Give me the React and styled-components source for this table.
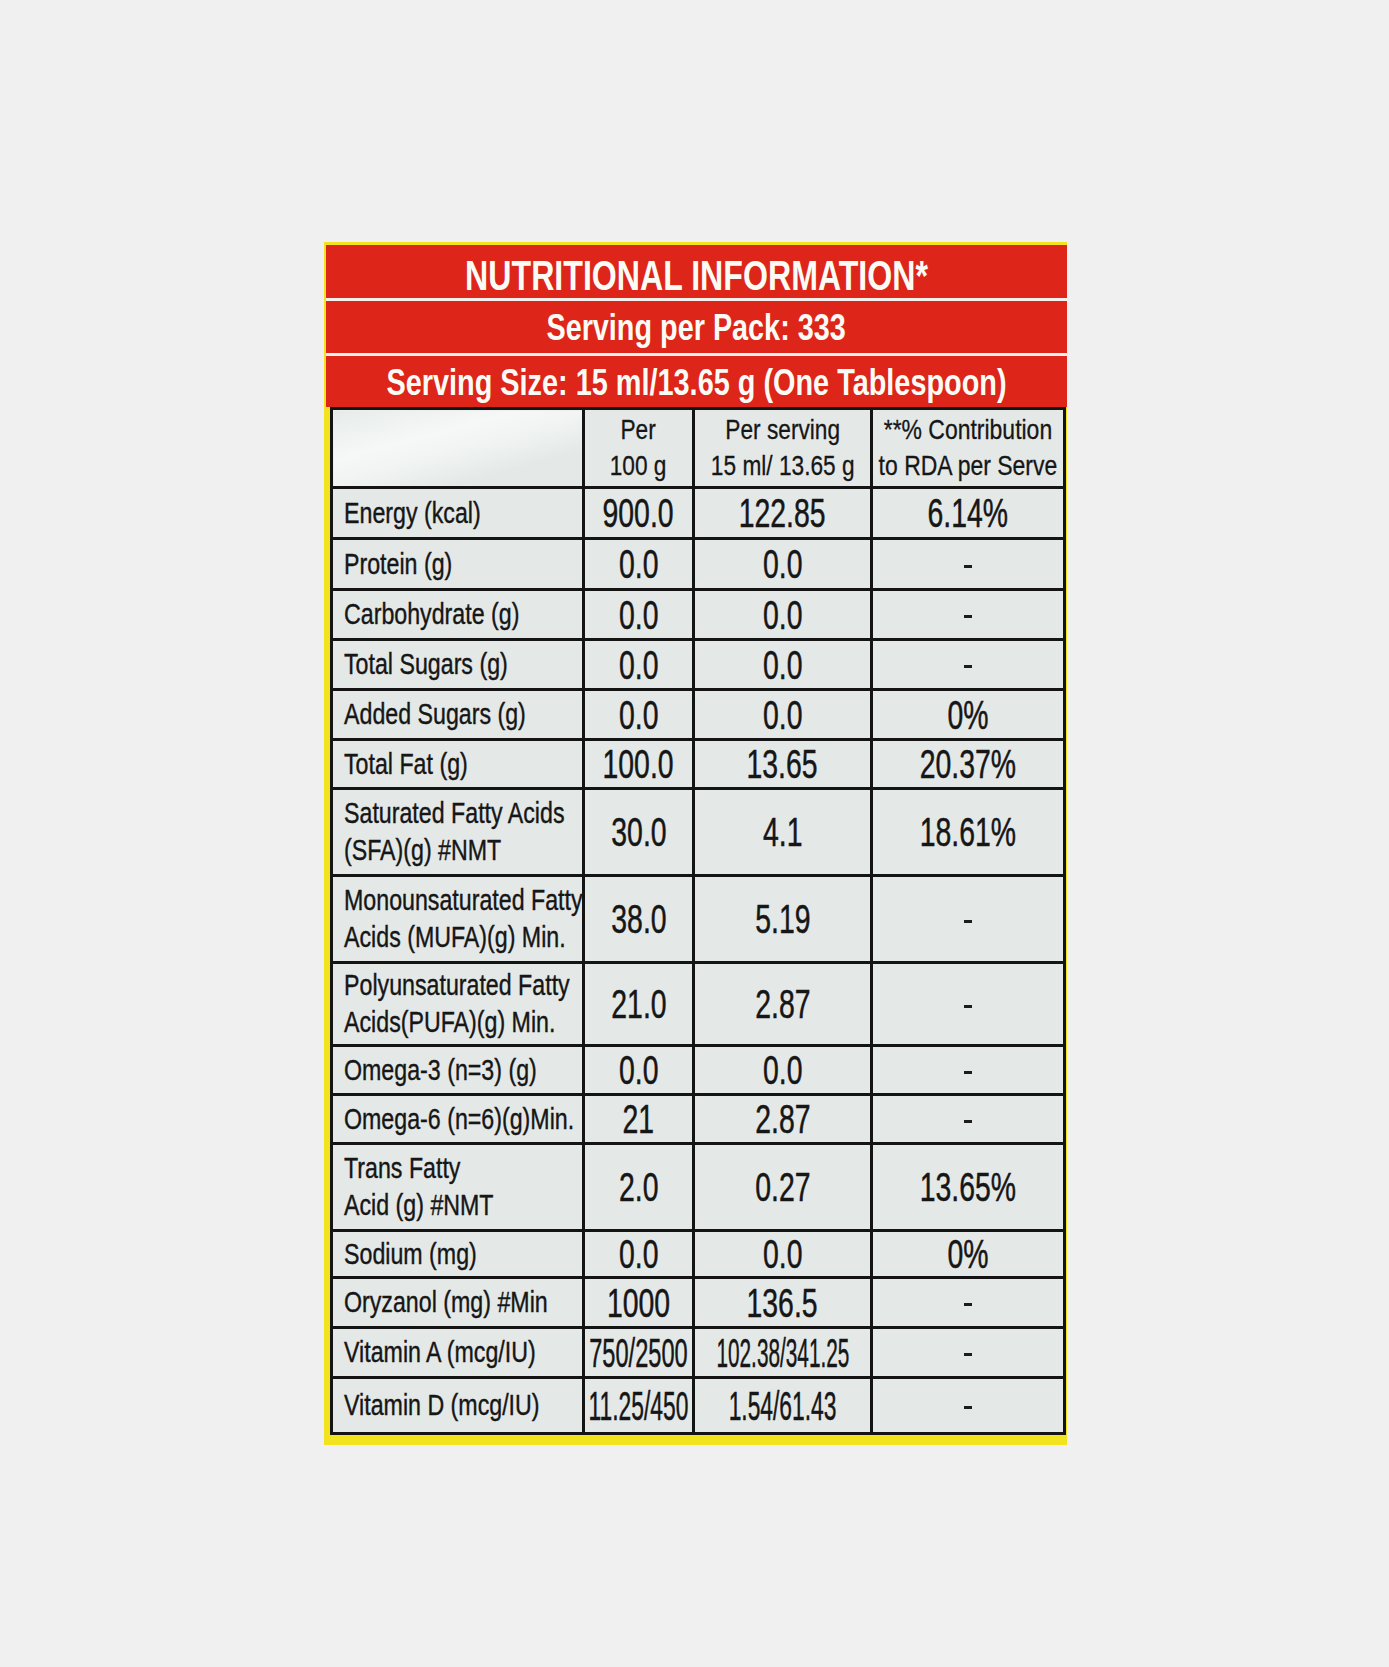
import React from 'react';
import styled, { createGlobalStyle } from 'styled-components';

const FONT = '"Liberation Sans", Arial, sans-serif';

const GlobalStyle = createGlobalStyle`
  html, body {
    margin: 0;
    padding: 0;
    background: #f0f0f0;
  }
  body {
    font-family: ${FONT};
    color: #161616;
  }
`;

const Page = styled.div`
  min-height: 1667px;
  padding-top: 242px;
  padding-left: 324px;
  box-sizing: border-box;
`;

const Panel = styled.div`
  width: 743px;
  background: #f3e31e;
  padding: 3px 0 10px 2px;
  box-sizing: border-box;
`;

const RedHeader = styled.div`
  background: #f7f1ee;
  display: flex;
  flex-direction: column;
  gap: 3px;
`;

const RedBand = styled.div`
  background: #dd2519;
  height: ${(p) => p.$h}px;
  display: flex;
  align-items: center;
  justify-content: center;
  padding-top: ${(p) => p.$shift || 0}px;
  box-sizing: border-box;
  color: #fbfbf6;
  font-weight: 700;
  font-size: ${(p) => p.$size}px;
  white-space: nowrap;
  overflow: hidden;
`;

// condensed type: the label font is a narrow grotesque, so squeeze a regular face
const Squeeze = styled.span`
  display: inline-block;
  flex: none;
  white-space: pre;
  transform: scaleX(${(p) => p.$scale});
  transform-origin: ${(p) => (p.$left ? 'left center' : 'center center')};
`;

const TableWrap = styled.div`
  padding: 0 4px;
`;

const Table = styled.table`
  width: 733px;
  border-collapse: collapse;
  table-layout: fixed;
  background: #e4e9e8;
  border: 3px solid #141414;
`;

const Cell = styled.td`
  border: 3px solid #141414;
  padding: 0;
  vertical-align: middle;
`;

const HeadCell = styled.th`
  border: 3px solid #141414;
  padding: 0;
  font-weight: 400;
  vertical-align: middle;
  background: ${(p) =>
    p.$glare
      ? 'linear-gradient(165deg, #e6ebea 0%, #f6f8f7 35%, #f1f4f3 50%, #e4e9e8 75%)'
      : 'transparent'};
`;

const CellBox = styled.div`
  display: flex;
  align-items: center;
  justify-content: ${(p) => (p.$left ? 'flex-start' : 'center')};
  padding-left: ${(p) => (p.$left ? 11 : 0)}px;
`;

const HeadText = styled(Squeeze)`
  font-size: 28px;
  line-height: 36px;
  text-align: center;
  -webkit-text-stroke: 0.3px #161616;
`;

const Label = styled(Squeeze)`
  font-size: 29px;
  line-height: 37px;
  -webkit-text-stroke: 0.4px #161616;
`;

const Num = styled(Squeeze)`
  font-size: 40px;
  line-height: 40px;
  -webkit-text-stroke: 0.5px #161616;
`;

const Dash = styled.span`
  display: inline-block;
  width: 8px;
  height: 3px;
  background: #1c1c1c;
  margin-top: 4px;
`;

const rows = [
  { label: 'Energy (kcal)', a: '900.0', b: '122.85', c: '6.14%', h: 51 },
  { label: 'Protein (g)', a: '0.0', b: '0.0', c: '-', h: 51 },
  { label: 'Carbohydrate (g)', a: '0.0', b: '0.0', c: '-', h: 50 },
  { label: 'Total Sugars (g)', a: '0.0', b: '0.0', c: '-', h: 50 },
  { label: 'Added Sugars (g)', a: '0.0', b: '0.0', c: '0%', h: 50 },
  { label: 'Total Fat (g)', a: '100.0', b: '13.65', c: '20.37%', h: 49 },
  { label: 'Saturated Fatty Acids\n(SFA)(g) #NMT', a: '30.0', b: '4.1', c: '18.61%', h: 87 },
  { label: 'Monounsaturated Fatty\nAcids (MUFA)(g) Min.', a: '38.0', b: '5.19', c: '-', h: 87 },
  { label: 'Polyunsaturated Fatty\nAcids(PUFA)(g) Min.', a: '21.0', b: '2.87', c: '-', h: 83 },
  { label: 'Omega-3 (n=3) (g)', a: '0.0', b: '0.0', c: '-', h: 49 },
  { label: 'Omega-6 (n=6)(g)Min.', a: '21', b: '2.87', c: '-', h: 49 },
  { label: 'Trans Fatty\nAcid (g) #NMT', a: '2.0', b: '0.27', c: '13.65%', h: 87 },
  { label: 'Sodium (mg)', a: '0.0', b: '0.0', c: '0%', h: 47 },
  { label: 'Oryzanol (mg) #Min', a: '1000', b: '136.5', c: '-', h: 50 },
  { label: 'Vitamin A (mcg/IU)', a: '750/2500', b: '102.38/341.25', c: '-', h: 50, sa: 0.59, sb: 0.52 },
  { label: 'Vitamin D (mcg/IU)', a: '11.25/450', b: '1.54/61.43', c: '-', h: 56, sa: 0.57, sb: 0.57 },
];

const Value = ({ v, scale = 0.71 }) => (
  <CellBox>
    {v === '-' ? <Dash /> : <Num $scale={scale}>{v}</Num>}
  </CellBox>
);

const App = () => (
  <>
    <GlobalStyle />
    <Page>
      <Panel>
        <RedHeader>
          <RedBand $h={53} $size={42} $shift={8}>
            <Squeeze $scale={0.765}>NUTRITIONAL INFORMATION*</Squeeze>
          </RedBand>
          <RedBand $h={52} $size={36} $shift={2}>
            <Squeeze $scale={0.8}>Serving per Pack: 333</Squeeze>
          </RedBand>
          <RedBand $h={51} $size={37} $shift={2}>
            <Squeeze $scale={0.78}>Serving Size: 15 ml/13.65 g (One Tablespoon)</Squeeze>
          </RedBand>
        </RedHeader>
        <TableWrap>
          <Table>
            <colgroup>
              <col style={{ width: 252 }} />
              <col style={{ width: 110 }} />
              <col style={{ width: 178 }} />
              <col style={{ width: 193 }} />
            </colgroup>
            <thead>
              <tr style={{ height: 79 }}>
                <HeadCell $glare />
                <HeadCell>
                  <CellBox>
                    <HeadText $scale={0.81}>{'Per\n100 g'}</HeadText>
                  </CellBox>
                </HeadCell>
                <HeadCell>
                  <CellBox>
                    <HeadText $scale={0.81}>{'Per serving\n15 ml/ 13.65 g'}</HeadText>
                  </CellBox>
                </HeadCell>
                <HeadCell>
                  <CellBox>
                    <HeadText $scale={0.82}>{'**% Contribution\nto RDA per Serve'}</HeadText>
                  </CellBox>
                </HeadCell>
              </tr>
            </thead>
            <tbody>
              {rows.map((r) => (
                <tr key={r.label} style={{ height: r.h }}>
                  <Cell>
                    <CellBox $left>
                      <Label $scale={0.8} $left>
                        {r.label}
                      </Label>
                    </CellBox>
                  </Cell>
                  <Cell>
                    <Value v={r.a} scale={r.sa} />
                  </Cell>
                  <Cell>
                    <Value v={r.b} scale={r.sb} />
                  </Cell>
                  <Cell>
                    <Value v={r.c} />
                  </Cell>
                </tr>
              ))}
            </tbody>
          </Table>
        </TableWrap>
      </Panel>
    </Page>
  </>
);

export default App;
